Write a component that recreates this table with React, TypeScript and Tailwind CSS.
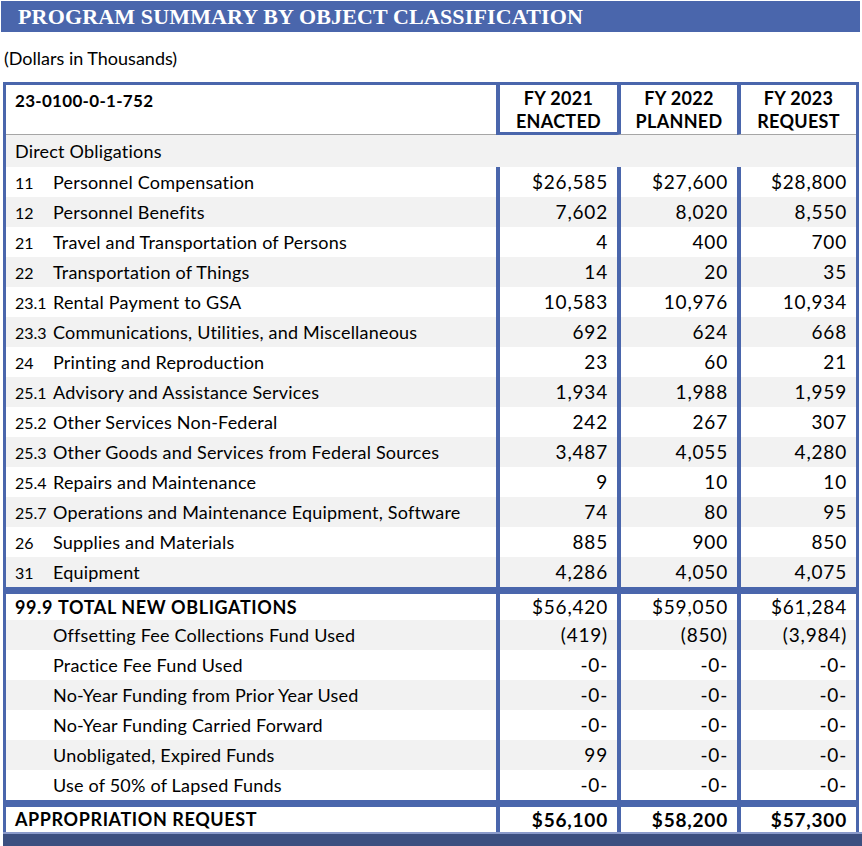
const BLUE = 'border-[#4a66ac]';

type Row = { code?: string; label: string; values: [string, string, string] };

const DIRECT: Row[] = [
  { code: '11', label: 'Personnel Compensation', values: ['$26,585', '$27,600', '$28,800'] },
  { code: '12', label: 'Personnel Benefits', values: ['7,602', '8,020', '8,550'] },
  { code: '21', label: 'Travel and Transportation of Persons', values: ['4', '400', '700'] },
  { code: '22', label: 'Transportation of Things', values: ['14', '20', '35'] },
  { code: '23.1', label: 'Rental Payment to GSA', values: ['10,583', '10,976', '10,934'] },
  { code: '23.3', label: 'Communications, Utilities, and Miscellaneous', values: ['692', '624', '668'] },
  { code: '24', label: 'Printing and Reproduction', values: ['23', '60', '21'] },
  { code: '25.1', label: 'Advisory and Assistance Services', values: ['1,934', '1,988', '1,959'] },
  { code: '25.2', label: 'Other Services Non-Federal', values: ['242', '267', '307'] },
  { code: '25.3', label: 'Other Goods and Services from Federal Sources', values: ['3,487', '4,055', '4,280'] },
  { code: '25.4', label: 'Repairs and Maintenance', values: ['9', '10', '10'] },
  { code: '25.7', label: 'Operations and Maintenance Equipment, Software', values: ['74', '80', '95'] },
  { code: '26', label: 'Supplies and Materials', values: ['885', '900', '850'] },
  { code: '31', label: 'Equipment', values: ['4,286', '4,050', '4,075'] },
];

const FUNDING: Row[] = [
  { label: 'Offsetting Fee Collections Fund Used', values: ['(419)', '(850)', '(3,984)'] },
  { label: 'Practice Fee Fund Used', values: ['-0-', '-0-', '-0-'] },
  { label: 'No-Year Funding from Prior Year Used', values: ['-0-', '-0-', '-0-'] },
  { label: 'No-Year Funding Carried Forward', values: ['-0-', '-0-', '-0-'] },
  { label: 'Unobligated, Expired Funds', values: ['99', '-0-', '-0-'] },
  { label: 'Use of 50% of Lapsed Funds', values: ['-0-', '-0-', '-0-'] },
];

// column widths include the 4px blue rule on the left
const COL_W = ['w-[121px]', 'w-[120px]', 'w-[119px]'];

function ValueCells({ values, bold }: { values: [string, string, string]; bold?: boolean }) {
  return (
    <>
      {values.map((v, i) => (
        <div
          key={i}
          className={`${COL_W[i]} shrink-0 border-l-4 ${BLUE} pr-[9px] text-right text-[19px] tracking-[0.8px] ${bold ? 'font-bold' : ''}`}
        >
          {v}
        </div>
      ))}
    </>
  );
}

function DataRow({ row, shaded }: { row: Row; shaded: boolean }) {
  return (
    <div className={`flex h-[30px] items-center leading-[30px] ${shaded ? 'bg-[#f2f2f2]' : 'bg-white'}`}>
      <div className="flex flex-1 items-baseline pl-[9px] tracking-[0.2px]">
        <span className="inline-block w-[38px] shrink-0 text-[16px] tracking-normal">{row.code}</span>
        <span>{row.label}</span>
      </div>
      <ValueCells values={row.values} />
    </div>
  );
}

export default function App() {
  return (
    <div className="h-[846px] w-[862px] bg-white font-['Lato',sans-serif] text-[18px] text-black">
      {/* Title bar */}
      <div className="ml-[1px] mt-[1px] flex h-[31px] w-[859px] items-center bg-[#4a66ac] pl-[17px]">
        <h1 className="font-['Liberation_Serif',serif] text-[22px] font-bold leading-none tracking-[0.15px] text-white">
          PROGRAM SUMMARY BY OBJECT CLASSIFICATION
        </h1>
      </div>

      <p className="ml-[4px] mt-[14px] leading-[24px]">(Dollars in Thousands)</p>

      {/* Table */}
      <div className={`ml-[3px] mt-[12px] w-[856px] border-x-[3px] border-t-[3px] ${BLUE}`}>
        {/* Header */}
        <div className="flex h-[50px]">
          <div className="flex-1 border-b border-[#a6a6a6] pl-[9px] pt-[4px] text-[17px] font-bold leading-[24px] tracking-[0.3px]">
            23-0100-0-1-752
          </div>
          {[
            ['FY 2021', 'ENACTED', 'w-[121px] border-b-[3px] border-b-[#4a66ac]'],
            ['FY 2022', 'PLANNED', 'w-[120px] border-b border-b-[#a6a6a6]'],
            ['FY 2023', 'REQUEST', 'w-[119px] border-b border-b-[#a6a6a6]'],
          ].map(([fy, status, cls]) => (
            <div
              key={fy}
              className={`${cls} flex shrink-0 flex-col items-center border-l-4 border-l-[#4a66ac] pt-[2px] font-bold leading-[23px] tracking-[0.3px]`}
            >
              <span>{fy}</span>
              <span>{status}</span>
            </div>
          ))}
        </div>

        {/* Direct obligations */}
        <div className="flex h-[32px] items-center bg-[#f2f2f2] leading-[32px]">
          <div className="flex-1 pl-[9px] tracking-[0.2px]">Direct Obligations</div>
          <ValueCells values={['', '', '']} />
        </div>
        {DIRECT.map((row, i) => (
          <DataRow key={row.code} row={row} shaded={i % 2 === 1} />
        ))}

        <div className="h-[7px] bg-[#4a66ac]" />

        {/* Total */}
        <div className="flex h-[26px] items-center bg-white leading-[26px]">
          <div className="flex flex-1 pl-[9px] font-bold tracking-[0.6px]">
            <span className="inline-block w-[43px] shrink-0">99.9</span>
            <span>TOTAL NEW OBLIGATIONS</span>
          </div>
          <ValueCells values={['$56,420', '$59,050', '$61,284']} />
        </div>
        {FUNDING.map((row, i) => (
          <DataRow key={row.label} row={row} shaded={i % 2 === 0} />
        ))}

        <div className="h-[7px] bg-[#4a66ac]" />

        {/* Appropriation */}
        <div className="flex h-[25px] items-center bg-white leading-[25px]">
          <div className="flex-1 pl-[9px] font-bold tracking-[0.6px]">APPROPRIATION REQUEST</div>
          <ValueCells values={['$56,100', '$58,200', '$57,300']} bold />
        </div>
      </div>

      {/* Footer band */}
      <div className="ml-[3px] h-[14px] w-[859px] border-t-2 border-[#8a9acb] bg-[#3c4f80]" />
    </div>
  );
}
